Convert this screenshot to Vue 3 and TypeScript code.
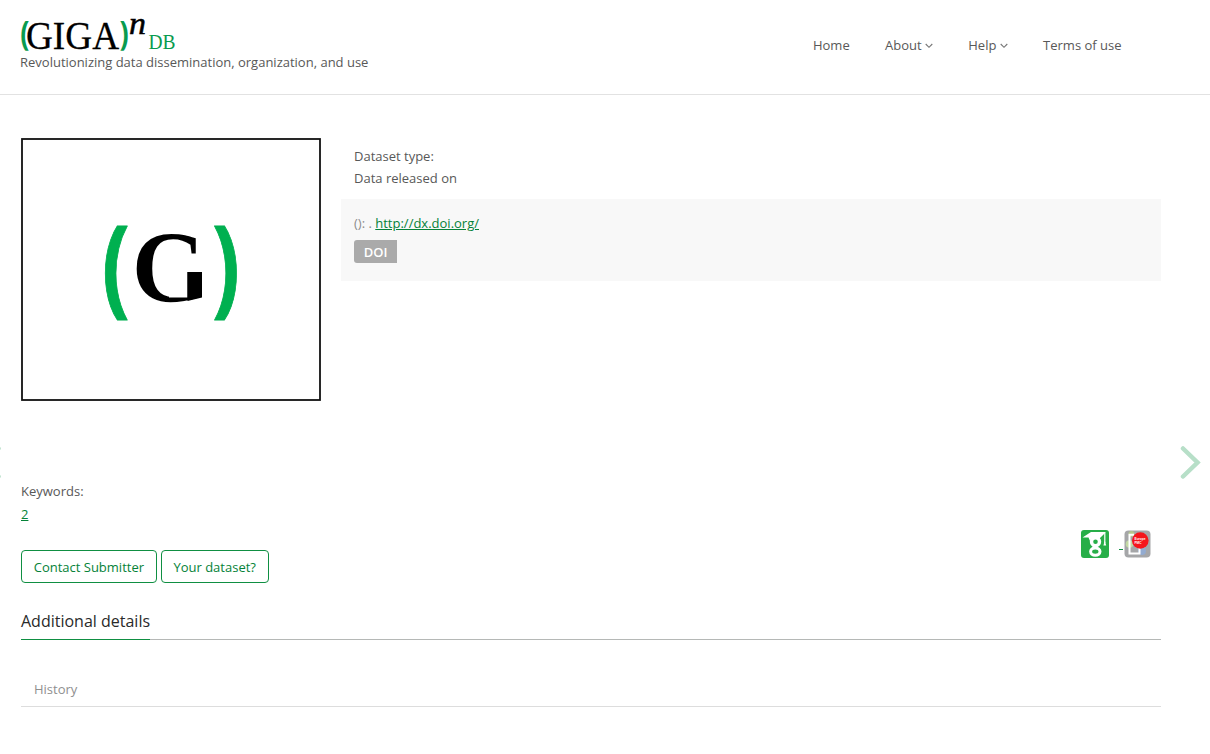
<script setup lang="ts">
interface NavItem {
  label: string
  menu: boolean
}

const nav: NavItem[] = [
  { label: 'Home', menu: false },
  { label: 'About', menu: true },
  { label: 'Help', menu: true },
  { label: 'Terms of use', menu: false },
]

const actions: string[] = ['Contact Submitter', 'Your dataset?']
</script>

<template>
  <div class="page">
    <header class="header">
      <div class="brand">
        <svg class="logo" width="160" height="36" viewBox="0 0 160 36" role="img" aria-label="GigaDB">
          <text class="paren" transform="translate(0.300 26.500) scale(0.8 1)" font-size="34">(</text>
          <text class="word" x="6" y="30.500" textLength="93" lengthAdjust="spacingAndGlyphs" font-size="41">GIGA</text>
          <text class="paren" transform="translate(99.500 26.500) scale(0.8 1)" font-size="34">)</text>
          <text class="sup" x="109" y="16" textLength="17" lengthAdjust="spacingAndGlyphs" font-size="31">n</text>
          <text class="db" x="128.500" y="31" textLength="27" lengthAdjust="spacingAndGlyphs" font-size="22">DB</text>
        </svg>
        <div class="tagline">Revolutionizing data dissemination, organization, and use</div>
      </div>
      <nav class="nav">
        <a v-for="item in nav" :key="item.label" class="nav-item">
          {{ item.label }}
          <svg v-if="item.menu" class="chevron" width="8" height="6" viewBox="0 0 8 6">
            <path d="M0.700 1 L4 4.300 L7.300 1" />
          </svg>
        </a>
      </nav>
    </header>

    <main class="content">
      <section class="summary">
        <svg class="cover" width="300" height="263" viewBox="0 0 300 263" role="img" aria-label="Dataset image">
          <defs>
            <clipPath id="g-trim">
              <path d="M105 85 H181 V128 H148 V159.500 H166.500 V134 H181 V180 H105 Z" />
            </clipPath>
          </defs>
          <rect x="1" y="1" width="298" height="261" fill="#fff" stroke="#111" stroke-width="1.800" />
          <text class="cover-paren" transform="translate(81 165) scale(0.76 1)" font-size="108">(</text>
          <g clip-path="url(#g-trim)">
            <text class="cover-g" transform="translate(111 163.500) scale(0.94 1)" font-size="102">G</text>
          </g>
          <path d="M166.500 134 H181 V159.500 L166.500 163 Z" fill="#000" />
          <text class="cover-paren" transform="translate(191 165) scale(0.76 1)" font-size="108">)</text>
        </svg>
        <div class="info">
          <div class="meta">
            <div>Dataset type:</div>
            <div>Data released on</div>
          </div>
          <div class="citation">
            <div class="cite-line">(): . <a class="link">http://dx.doi.org/</a></div>
            <span class="doi">DOI</span>
          </div>
        </div>
      </section>

      <section class="keywords">
        <div>Keywords:</div>
        <a class="link">2</a>
      </section>

      <section class="tools">
        <div class="buttons">
          <button v-for="action in actions" :key="action" class="btn" type="button">{{ action }}</button>
        </div>
        <div class="badges">
          <svg width="28" height="28" viewBox="0 0 28 28">
            <rect width="28" height="28" rx="3" fill="#27ae48" />
            <ellipse cx="14.500" cy="11.800" rx="4" ry="4" fill="#27ae48" stroke="#fff" stroke-width="3.400" />
            <path d="M1.500 7.500 L10 2 L25 2 L18.500 8.500 L10.500 8.500 L9 11 L7.500 7.500 Z" fill="#fff" />
            <path d="M23.800 3 V13" stroke="#fff" stroke-width="1.200" />
            <path d="M23.800 10.500 L25.200 15.500 H22.400 Z" fill="#fff" />
            <path d="M15 15.500 L12 18.500" fill="none" stroke="#fff" stroke-width="3.500" />
            <ellipse cx="14.300" cy="21.600" rx="4.700" ry="3.700" fill="#27ae48" stroke="#fff" stroke-width="3" />
          </svg>
          <span class="dash"></span>
          <svg width="27" height="28" viewBox="0 0 27 28">
            <rect x="0.500" y="0.500" width="26" height="27" rx="4" fill="#a5a6a8" />
            <circle cx="5.500" cy="14" r="3.800" fill="#c3d9a4" />
            <circle cx="18" cy="21" r="4" fill="#93abd0" />
            <circle cx="7.500" cy="4" r="3" fill="#b4c68d" />
            <path d="M10 4.700 H5.500 V23.500 H15.500 V18" fill="none" stroke="#fff" stroke-width="2" />
            <circle cx="16.300" cy="10.500" r="8.300" fill="#f5151b" />
            <text class="badge-text" x="10.500" y="9.500" textLength="11" lengthAdjust="spacingAndGlyphs">Europe</text>
            <text class="badge-text" x="10.500" y="13.500" textLength="7" lengthAdjust="spacingAndGlyphs">PMC</text>
          </svg>
        </div>
      </section>

      <div class="details-head"><h4 class="details-title">Additional details</h4></div>
      <div class="tabs"><span class="tab">History</span></div>
    </main>

    <svg class="pager prev" width="22" height="35" viewBox="0 0 22 35"><path d="M18.500 3.500 L4.500 17.500 L18.500 31.500" /></svg>
    <svg class="pager next" width="22" height="35" viewBox="0 0 22 35"><path d="M3 3.500 L17.500 17.500 L3 31.500" /></svg>
  </div>
</template>

<style>
body {
  background: #fff;
}
</style>

<style scoped>
.page {
  position: relative;
  width: 1210px;
  height: 754px;
  overflow: hidden;
  box-sizing: border-box;
  font-family: 'Open Sans', 'Noto Sans', sans-serif;
  font-size: 13px;
  line-height: 22px;
  color: #585858;
}
.header {
  box-sizing: border-box;
  height: 95px;
  padding: 18px 88.5px 0 20px;
  display: flex;
  justify-content: space-between;
  border-bottom: 1px solid #e2e2e2;
}
.logo {
  display: block;
  overflow: visible;
}
.paren {
  font-family: 'Open Sans', sans-serif;
  font-weight: 700;
  fill: #099b4f;
}
.word {
  font-family: 'Liberation Serif', serif;
  fill: #000;
  stroke: #000;
  stroke-width: 0.3;
}
.sup {
  font-family: 'Liberation Serif', serif;
  font-style: italic;
  fill: #000;
  stroke: #000;
  stroke-width: 0.5;
}
.db {
  font-family: 'Liberation Serif', serif;
  fill: #099b4f;
}
.tagline {
  line-height: 18px;
  margin-top: -1px;
}
.nav {
  display: flex;
  gap: 35.3px;
  padding-top: 16px;
}
.nav-item {
  white-space: nowrap;
}
.chevron {
  vertical-align: 1px;
}
.chevron path {
  fill: none;
  stroke: #777;
  stroke-width: 1.1;
}
.content {
  width: 1140px;
  margin-left: 21px;
  padding-top: 43px;
}
.summary {
  display: flex;
  gap: 20px;
  height: 342px;
}
.cover {
  flex: none;
}
.cover-paren {
  font-family: 'Open Sans', sans-serif;
  font-weight: bold;
  fill: #00b050;
  stroke: #00b050;
  stroke-width: 1;
  stroke-linejoin: round;
}
.cover-g {
  font-family: 'Liberation Serif', serif;
  font-weight: bold;
  fill: #000;
}
.info {
  flex: 1;
}
.meta {
  padding: 7px 13px 10px;
}
.citation {
  box-sizing: border-box;
  height: 82px;
  padding: 13px;
  background: #f8f8f8;
  color: #8c8c8c;
}
.link {
  color: #058238;
  text-decoration: underline;
}
.doi {
  display: block;
  width: 43px;
  height: 23px;
  margin-top: 6px;
  border-radius: 3px 0 0 3px;
  background: #aaa;
  color: #fff;
  font-weight: 600;
  line-height: 24px;
  text-align: center;
}
.keywords {
  line-height: 23px;
  height: 50px;
}
.tools {
  display: flex;
  justify-content: space-between;
  height: 53px;
}
.buttons {
  display: flex;
  gap: 4px;
  padding-top: 20px;
}
.btn {
  height: 33px;
  padding: 0 11.7px;
  border: 1px solid #0f8f42;
  border-radius: 4px;
  background: #fff;
  color: #058238;
  font: inherit;
}
.badges {
  display: flex;
  align-items: flex-start;
  padding-right: 10px;
}
.dash {
  width: 4px;
  height: 1px;
  margin: 19px 1px 0 10px;
  background: #0f8f42;
}
.badge-text {
  font: bold 3.5px 'Liberation Sans', sans-serif;
  fill: #fff;
}
.details-head {
  display: flex;
  height: 56px;
  border-bottom: 1px solid #b5b8b6;
}
.details-title {
  height: 29px;
  margin: 27px 0 0;
  border-bottom: 1px solid #0f8f42;
  color: #2a2a2a;
  font-size: 16px;
  font-weight: 400;
}
.tabs {
  display: flex;
  height: 66px;
  border-bottom: 1px solid #ddd;
}
.tab {
  padding: 38px 13px 0;
  color: #8f8f8f;
}
.pager {
  position: absolute;
  top: 445px;
}
.pager path {
  fill: none;
  stroke: #b7dfc8;
  stroke-width: 4.5;
  stroke-linecap: round;
}
.prev {
  left: -20px;
}
.next {
  right: 8px;
}
</style>
